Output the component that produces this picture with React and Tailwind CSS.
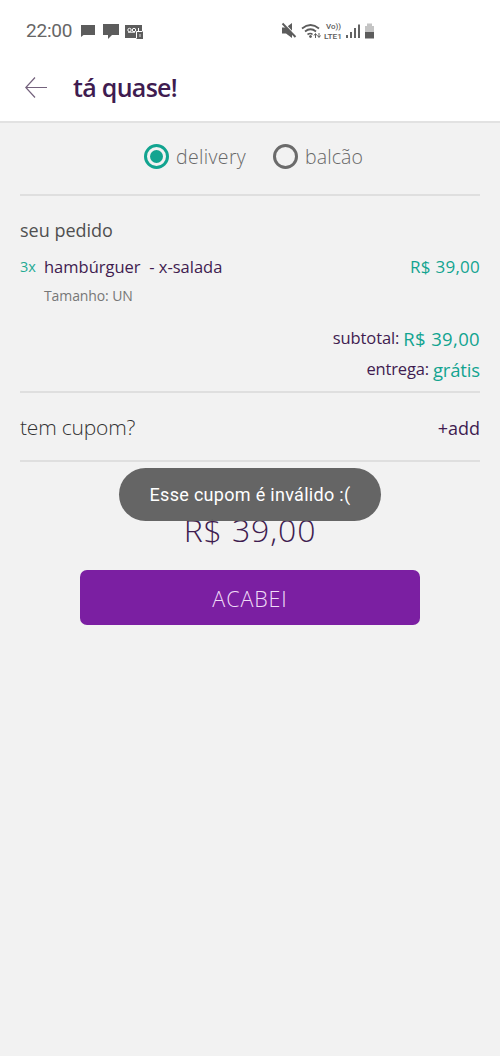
import React, { useState } from 'react';

const StatusIcons = () => (
  <div className="flex items-center">
    <svg width="15" height="14" viewBox="0 0 15 14" fill="#5c5c5c">
      <path d="M1 1h14v10H3.500L1 13z" />
    </svg>
    <svg className="ml-2" width="16" height="16" viewBox="0 0 16 16" fill="#5c5c5c">
      <path d="M0 1h16v11H9l-4 4v-4H0z" />
    </svg>
    <svg className="ml-[6px]" width="18" height="15" viewBox="0 0 18 15" fill="none">
      <path d="M0 1h17v6h1v8h-7v-1H0z" fill="#5c5c5c" />
      <circle cx="4.500" cy="6" r="1.700" stroke="#fff" />
      <circle cx="9" cy="6" r="1.700" stroke="#fff" />
      <path d="M3 8.200h7M13.500 4v3M11.500 14.500V7.500h6" stroke="#fff" />
      <path d="M12 8h6v7h-6z" fill="#5c5c5c" />
      <path d="M15 10v3" stroke="#ddd" />
    </svg>
  </div>
);

const SignalIcons = () => (
  <svg width="96" height="18" viewBox="0 0 96 18" fill="none" stroke="#5c5c5c">
    <path d="M1 5.500h4L11 1v15l-6-4.500H1z" fill="#5c5c5c" stroke="none" />
    <path d="M3 1l12 13" stroke="#fff" strokeWidth="1.200" />
    <path d="M1.500 1.500l13 13.500" strokeWidth="1.900" />
    <path d="M21 6.500q8.500-7 17 0M24 9.500q5.500-4.500 11 0M26.500 12.500q3-2 5 0" strokeWidth="1.700" />
    <circle cx="29.500" cy="14.500" r="1" fill="#5c5c5c" />
    <path d="M34.500 16v-4M33 13.500l1.500-2 1.500 2M38 11v4M36.500 13.500l1.500 2 1.500-2" strokeWidth="1" />
    <text x="45" y="7" fontSize="7.500" fill="#5c5c5c" stroke="none" textLength="15" lengthAdjust="spacingAndGlyphs" className="font-['Roboto'] font-medium">Vo))</text>
    <text x="43" y="16.500" fontSize="8" fill="#5c5c5c" stroke="none" textLength="18" lengthAdjust="spacingAndGlyphs" className="font-['Roboto'] font-medium">LTE1</text>
    <path d="M66 16v-3M70 16v-6M74 16V6M78 16V2.500" strokeWidth="1.900" />
    <path d="M84 4h2V1.500h5V4h2v7h-9z" fill="#c4c4c4" stroke="none" />
    <path d="M84 10h9v6.500h-9z" fill="#5c5c5c" stroke="none" />
  </svg>
);

const Radio = ({ label, checked, onClick, labelClass }) => (
  <button type="button" onClick={onClick} className="flex items-center">
    <span className={`flex size-[25px] items-center justify-center rounded-full border-[3px] ${checked ? 'border-[#12a490]' : 'border-[#6b6b6b]'}`}>
      {checked && <span className="size-[13px] rounded-full bg-[#12a490]" />}
    </span>
    <span className={`ml-[7px] whitespace-nowrap pt-px text-left text-[19.500px] font-light text-[#686868] ${labelClass}`}>{label}</span>
  </button>
);

const App = () => {
  const [mode, setMode] = useState('delivery');

  return (
    <div className="relative h-[1056px] w-[500px] overflow-hidden bg-[#f2f2f2] font-['Open_Sans','Noto_Sans',sans-serif] text-[#3f1c50]">
      <div className="flex h-[62px] items-center bg-white">
        <span className="ml-[26px] w-[54px] font-['Roboto',sans-serif] text-[19px] tracking-[-0.2px] text-[#666]">22:00</span>
        <StatusIcons />
        <div className="ml-[138px]"><SignalIcons /></div>
      </div>
      <header className="flex h-[61px] items-center border-b-2 border-[#e2e2e2] bg-white pb-[8px]">
        <button type="button" aria-label="voltar" className="ml-[25px] w-12">
          <svg width="23" height="22" viewBox="0 0 23 22" fill="none" stroke="#74627d" strokeWidth="1.200">
            <path d="M22 10.500H1M10 .5L.8 10.500 10 20.500" />
          </svg>
        </button>
        <h1 className="text-[25px] font-semibold tracking-[-0.7px]">tá quase!</h1>
      </header>

      <main className="px-5">
        <div className="flex h-[73px] items-start justify-center border-b-2 border-[#dfdfdf] pt-[18px]">
          <Radio label="delivery" checked={mode === 'delivery'} onClick={() => setMode('delivery')} labelClass="w-[97px] tracking-[0.35px]" />
          <Radio label="balcão" checked={mode === 'balcão'} onClick={() => setMode('balcão')} labelClass="w-[51px] tracking-[0.1px]" />
        </div>

        <section className="h-[197px] border-b-2 border-[#dfdfdf] pt-[21px]">
          <h2 className="h-[27px] text-lg leading-[27px] text-[#505050]">seu pedido</h2>
          <div className="mt-[11px] flex h-6 items-center">
            <span className="w-6 text-[14.500px] text-[#24aa94]">3x</span>
            <span className="whitespace-pre text-[16.500px]">hambúrguer  - x-salada</span>
            <span className="ml-auto text-[17px] tracking-[0.25px] text-[#12a490]">R$ 39,00</span>
          </div>
          <p className="ml-6 mt-[7px] text-sm leading-5 tracking-[-0.1px] text-[#777]">Tamanho: UN</p>
          <p className="mt-[17px] flex h-[31px] items-center justify-end gap-1 text-[16.500px] tracking-[-0.1px]">
            subtotal: <span className="text-[18.500px] tracking-[0.35px] text-[#12a490]">R$ 39,00</span>
          </p>
          <p className="flex h-[31px] items-center justify-end gap-1 text-[16.500px] tracking-[-0.15px]">
            entrega: <span className="text-[18.500px] text-[#12a490]">grátis</span>
          </p>
        </section>

        <div className="flex h-[69px] items-center justify-between border-b-2 border-[#dfdfdf] pb-px pt-[4px]">
          <span className="text-[21px] font-light tracking-[-0.2px] text-[#333]">tem cupom?</span>
          <button type="button" className="text-[18px]">+add</button>
        </div>

        <div className="flex flex-col items-center pt-[45px]">
          <p className="h-[46px] text-[32px] font-light leading-[46px] tracking-[0.9px]">R$ 39,00</p>
          <button type="button" className="mt-[17px] h-[55px] w-[340px] rounded-[7px] bg-[#7b1fa2] pt-[3px] text-[21.500px] font-light tracking-[0.9px] text-[#f0dcf7]">ACABEI</button>
        </div>
      </main>

      <div role="status" className="absolute left-[119px] top-[468px] flex h-[53px] w-[262px] items-center justify-center whitespace-nowrap rounded-full bg-[#606060]/97 font-['Roboto',sans-serif] text-[18px] tracking-[0.3px] text-white">
        Esse cupom é inválido :(
      </div>
    </div>
  );
};

export default App;
